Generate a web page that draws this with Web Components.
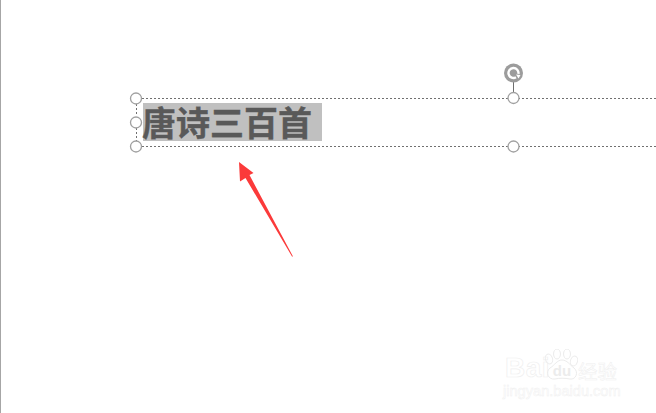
<!DOCTYPE html>
<html lang="zh">
<head>
<meta charset="utf-8">
<title>唐诗三百首</title>
<style>
  html, body { margin: 0; height: 100%; background: #fff; overflow: hidden; }
</style>
</head>
<body>
<slide-canvas>
  <selection-box>
    <title-text>唐诗三百首</title-text>
  </selection-box>
  <red-arrow></red-arrow>
  <baidu-mark></baidu-mark>
</slide-canvas>

<script>
class SlideCanvas extends HTMLElement {
  constructor() {
    super();
    this.attachShadow({ mode: 'open' });
    this.shadowRoot.innerHTML = `
      <style>
        :host {
          display: block;
          position: relative;
          width: 656px;
          height: 413px;
          background: linear-gradient(90deg, #a6a6a6 1px, #fff 1px);
          overflow: hidden;
        }
      </style>
      <slot></slot>
    `;
  }
}

class SelectionBox extends HTMLElement {
  constructor() {
    super();
    this.attachShadow({ mode: 'open' });
    this.shadowRoot.innerHTML = `
      <style>
        :host {
          display: block;
          position: absolute;
          left: 128px;
          top: 60px;
          width: 528px;
          height: 96px;
        }
        svg { position: absolute; left: 0; top: 0; }
        .text { position: absolute; left: 15px; top: 43px; }
      </style>
      <svg width="528" height="96" viewBox="128 60 528 96" fill="none">
        <g stroke="#707070" stroke-width="1" stroke-dasharray="2 2">
          <path d="M142 98.500H656"/>
          <path d="M142 146.500H656"/>
          <path d="M136.500 104V116"/>
          <path d="M136.500 128V141"/>
        </g>
        <path d="M513.500 82V92" stroke="#6e6e6e"/>
        <g fill="#fff" stroke="#a0a0a0" stroke-width="1.300">
          <circle cx="136" cy="98.500" r="5.500"/>
          <circle cx="136" cy="122.500" r="5.500"/>
          <circle cx="136" cy="146.500" r="5.500"/>
          <circle cx="513.500" cy="98" r="5.500"/>
          <circle cx="513.500" cy="146.500" r="5.500"/>
        </g>
        <circle cx="513.500" cy="73" r="9.500" fill="#9c9c9c"/>
        <path d="M516 77.300A5 5 0 1 1 518.400 73.900" stroke="#fff" stroke-width="2.400"/>
        <path d="M516 74.500l4.500 .5-2 3.500z" fill="#fff"/>
      </svg>
      <div class="text"><slot></slot></div>
    `;
  }
}

class TitleText extends HTMLElement {
  constructor() {
    super();
    this.attachShadow({ mode: 'open' });
    this.shadowRoot.innerHTML = `
      <style>
        :host {
          display: block;
          box-sizing: border-box;
          width: 179px;
          height: 38px;
          background: #c0c0c0;
          color: #595959;
          font: 700 34px/38px "Noto Sans CJK SC", "Liberation Sans", sans-serif;
          -webkit-text-stroke: .4px #595959;
          text-indent: -1px;
          white-space: nowrap;
        }
      </style>
      <slot></slot>
    `;
  }
}

class RedArrow extends HTMLElement {
  constructor() {
    super();
    this.attachShadow({ mode: 'open' });
    this.shadowRoot.innerHTML = `
      <style>
        :host { display: block; position: absolute; left: 238px; top: 161px; width: 58px; height: 98px; }
        svg { display: block; }
      </style>
      <svg width="58" height="98" viewBox="238 161 58 98">
        <path d="M239 162L253.500 173L249.500 175L293 256.500H292L245.500 178L240 181.500Z" fill="#fb3a3a"/>
      </svg>
    `;
  }
}

class BaiduMark extends HTMLElement {
  constructor() {
    super();
    this.attachShadow({ mode: 'open' });
    this.shadowRoot.innerHTML = `
      <style>
        :host {
          display: block;
          position: absolute;
          left: 505px;
          top: 349px;
          width: 125px;
          height: 52px;
          color: #fff;
          font-family: "Liberation Sans", sans-serif;
          -webkit-text-stroke: .7px #efefef;
        }
        .row { display: flex; align-items: flex-end; height: 33px; }
        .bai { font: 700 28px/28px "Liberation Sans", sans-serif; letter-spacing: .5px; width: 40px; }
        .paw { position: relative; width: 33px; height: 33px; flex: none; }
        .paw svg { display: block; }
        .du {
          position: absolute; left: 4px; bottom: 4px; width: 26px;
          text-align: center; font: 700 15px/15px "Liberation Sans", sans-serif;
          -webkit-text-stroke: 0;
          color: #ececec;
        }
        .jy { font: 400 19.500px/22px "Noto Sans CJK SC", sans-serif; white-space: nowrap; -webkit-text-stroke: .5px #efefef; }
        .url { font: 400 14.600px/15px "Liberation Sans", sans-serif; margin: 2px 0 0 -2px; white-space: nowrap; -webkit-text-stroke: .5px #f0f0f0; }
      </style>
      <div class="row">
        <span class="bai">Bai</span>
        <span class="paw">
          <svg width="33" height="33" viewBox="0 0 33 33" fill="none" stroke="#ececec" stroke-width="1">
            <ellipse cx="4" cy="10" rx="3.500" ry="5" transform="rotate(-18 4 10)"/>
            <ellipse cx="12" cy="5" rx="3.500" ry="5"/>
            <ellipse cx="22" cy="5" rx="3.500" ry="5"/>
            <ellipse cx="29" cy="12" rx="3.500" ry="5" transform="rotate(18 29 12)"/>
            <path d="M17 11C12 11 10 16 5 19C0 23 3 31 10 30C14 29 20 29 25 30C31 31 34 23 29 19C25 16 22 11 17 11Z"/>
          </svg>
          <span class="du">du</span>
        </span>
        <span class="jy">经验</span>
      </div>
      <div class="url">jingyan.baidu.com</div>
    `;
  }
}

customElements.define('slide-canvas', SlideCanvas);
customElements.define('selection-box', SelectionBox);
customElements.define('title-text', TitleText);
customElements.define('red-arrow', RedArrow);
customElements.define('baidu-mark', BaiduMark);
</script>
</body>
</html>
